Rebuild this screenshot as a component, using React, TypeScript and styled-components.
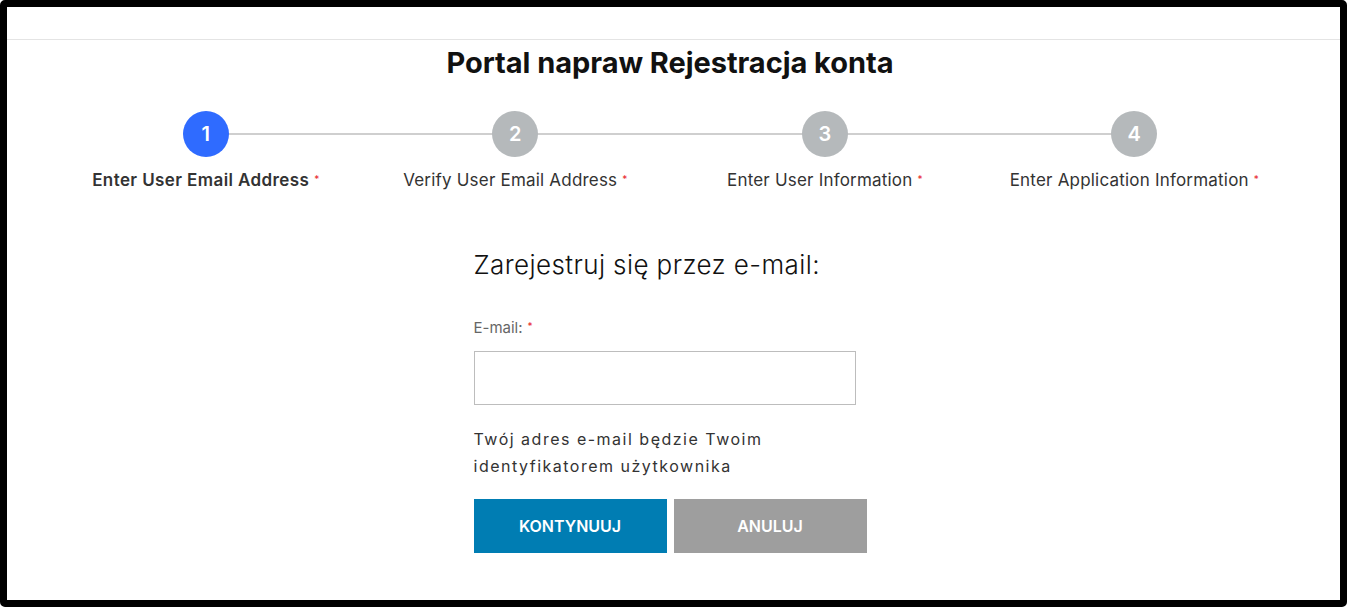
import React from "react";
import styled, { createGlobalStyle } from "styled-components";

const Global = createGlobalStyle`
  html, body { margin: 0; padding: 0; background: #fff; }
  body { font-family: Inter, "Open Sans", Arial, sans-serif; color: #222; }
  * { box-sizing: border-box; }
`;

const Frame = styled.div`
  width: 1347px;
  height: 607px;
  border: 7px solid #000;
  border-radius: 5px;
  background: #fff;
  display: flex;
  flex-direction: column;
  overflow: hidden;
`;

const TopBar = styled.div`
  height: 33px;
  border-bottom: 1px solid #e4e4e4;
  flex-shrink: 0;
`;

const Content = styled.div`
  padding-right: 7px;
  display: flex;
  flex-direction: column;
  align-items: center;
`;

const Title = styled.h1`
  margin: 6px 0 0;
  font-size: 29px;
  line-height: 34px;
  font-weight: 700;
  color: #111;
  text-align: center;
  letter-spacing: -0.05px;
`;

const Stepper = styled.ol`
  list-style: none;
  margin: 31px 0 0;
  padding: 0;
  width: 1238px;
  display: grid;
  grid-template-columns: repeat(4, 1fr);
`;

const Step = styled.li<{ $last?: boolean }>`
  position: relative;
  display: flex;
  flex-direction: column;
  align-items: center;
  &::after {
    content: "";
    display: ${(p) => (p.$last ? "none" : "block")};
    position: absolute;
    top: 22px;
    left: 50%;
    width: 100%;
    height: 2px;
    background: #cfcfcf;
    z-index: 0;
  }
`;

const Circle = styled.div<{ $active?: boolean }>`
  position: relative;
  z-index: 1;
  width: 46px;
  height: 46px;
  border-radius: 50%;
  background: ${(p) => (p.$active ? "#2f6bff" : "#b5b9bb")};
  color: #fff;
  font-size: 20px;
  font-weight: 600;
  display: flex;
  align-items: center;
  justify-content: center;
`;

const StepLabel = styled.div<{ $active?: boolean }>`
  margin-top: 12px;
  font-size: 17px;
  line-height: 20px;
  color: #333;
  font-weight: ${(p) => (p.$active ? 600 : 400)};
  letter-spacing: ${(p) => (p.$active ? "0.4px" : "0.2px")};
  white-space: nowrap;
`;

const Req = styled.span`
  color: #e8262c;
  font-size: 10px;
  margin-left: 5px;
  vertical-align: 3px;
  font-weight: 400;
  letter-spacing: 0;
`;

const Form = styled.form`
  width: 393px;
  margin-top: 59px;
  display: flex;
  flex-direction: column;
`;

const FormHeading = styled.h2`
  margin: 0;
  font-size: 26px;
  line-height: 32px;
  font-weight: 300;
  color: #111;
  letter-spacing: 0.4px;
`;

const FieldLabel = styled.label`
  margin-top: 36px;
  font-size: 15px;
  line-height: 18px;
  color: #666;
`;

const Input = styled.input`
  margin-top: 14px;
  width: 382px;
  height: 54px;
  border: 1px solid #bdbdbd;
  border-radius: 0;
  padding: 0 12px;
  font-size: 16px;
  outline: none;
`;

const Help = styled.p`
  margin: 21px 0 0;
  width: 382px;
  font-size: 16px;
  line-height: 27px;
  letter-spacing: 1.5px;
  color: #333;
`;

const Buttons = styled.div`
  margin-top: 19px;
  display: flex;
  gap: 7px;
`;

const Button = styled.button<{ $variant: "primary" | "secondary" }>`
  width: 193px;
  height: 54px;
  border: none;
  border-radius: 0;
  background: ${(p) => (p.$variant === "primary" ? "#007db3" : "#9e9e9e")};
  color: #fff;
  font-family: Inter, "Open Sans", Arial, sans-serif;
  font-size: 16px;
  font-weight: 600;
  text-transform: uppercase;
  cursor: pointer;
`;

const steps = [
  "Enter User Email Address",
  "Verify User Email Address",
  "Enter User Information",
  "Enter Application Information",
];

export default function App() {
  return (
    <>
      <Global />
      <Frame>
        <TopBar />
        <Content>
          <Title>Portal napraw Rejestracja konta</Title>
          <Stepper>
            {steps.map((s, i) => (
              <Step key={s} $last={i === steps.length - 1}>
                <Circle $active={i === 0}>{i + 1}</Circle>
                <StepLabel $active={i === 0}>
                  {s}
                  <Req>*</Req>
                </StepLabel>
              </Step>
            ))}
          </Stepper>
          <Form onSubmit={(e) => e.preventDefault()}>
            <FormHeading>Zarejestruj się przez e-mail:</FormHeading>
            <FieldLabel htmlFor="email">
              E-mail:<Req>*</Req>
            </FieldLabel>
            <Input id="email" type="email" />
            <Help>Twój adres e-mail będzie Twoim identyfikatorem użytkownika</Help>
            <Buttons>
              <Button type="submit" $variant="primary">Kontynuuj</Button>
              <Button type="button" $variant="secondary">Anuluj</Button>
            </Buttons>
          </Form>
        </Content>
      </Frame>
    </>
  );
}
